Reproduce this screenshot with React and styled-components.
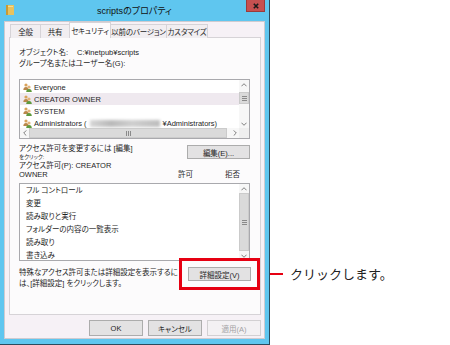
import styled, { createGlobalStyle } from "styled-components";

const GlobalStyle = createGlobalStyle`
  html, body {
    margin: 0;
    padding: 0;
    background: #ffffff;
  }
  body {
    font-family: "Liberation Sans", "Noto Sans CJK JP", sans-serif;
    font-size: 7.5px;
    color: #1e1e1e;
    font-feature-settings: "palt" 1;
  }
`;

const Page = styled.div`
  display: flex;
  align-items: flex-start;
  width: 450px;
  height: 345px;
  overflow: hidden;
`;

const Window = styled.div`
  width: 270px;
  height: 345px;
  box-sizing: border-box;
  display: flex;
  flex-direction: column;
  background: #5fc6ef;
  border-right: 1px solid #2b4b5e;
  border-bottom: 1px solid #2b4b5e;
  padding: 0 4px 5px 4px;
`;

const TitleBar = styled.div`
  height: 21px;
  flex-shrink: 0;
  display: grid;
  grid-template-columns: 19px 1fr 19px;
  align-items: start;
`;

const FolderIcon = styled.svg`
  width: 8px;
  height: 10px;
  margin: 5px 0 0 2px;
`;

const Title = styled.div`
  text-align: center;
  font-size: 9px;
  line-height: 10px;
  padding-top: 6px;
  color: #111;
`;

const CloseButton = styled.div`
  height: 12px;
  background: #c75050;
  border: 1px solid #9b3b3b;
  border-top: none;
  box-sizing: border-box;
  display: flex;
  align-items: center;
  justify-content: center;
`;

const Body = styled.div`
  flex: 1;
  display: flex;
  flex-direction: column;
  background: #f6f1f6;
  border: 1px solid #cfcbd0;
  padding: 0 3px 0 4px;
`;

const TabRow = styled.div`
  display: flex;
  align-items: flex-end;
  height: 16px;
  padding-left: 1px;
`;

const Tab = styled.div`
  width: ${p => p.$w}px;
  height: ${p => (p.$active ? 16 : 14)}px;
  box-sizing: border-box;
  border: 1px solid #d6d3d7;
  border-bottom: none;
  background: ${p => (p.$active ? "#fcfbfc" : "#f1eef1")};
  display: flex;
  align-items: center;
  justify-content: center;
  white-space: nowrap;
  letter-spacing: -0.2px;
  overflow: hidden;
  padding-bottom: ${p => (p.$active ? 1 : 0)}px;
  position: relative;
  z-index: ${p => (p.$active ? 1 : 0)};
  margin-left: -1px;
  &:first-child { margin-left: 0; }
`;

const Panel = styled.div`
  height: 278px;
  margin-top: -1px;
  box-sizing: border-box;
  border: 1px solid #d6d3d7;
  background: #fcfbfc;
  padding: 9px 10px 0 9px;
  display: flex;
  flex-direction: column;
`;

const InfoRow = styled.div`
  display: flex;
  height: 11px;
  line-height: 11px;
  white-space: nowrap;
`;

const InfoLabel = styled.span`
  width: 58px;
`;

const Listbox = styled.div`
  margin-top: ${p => p.$top}px;
  height: ${p => p.$h}px;
  box-sizing: border-box;
  border: 1px solid #a9a9ad;
  background: #ffffff;
  display: grid;
  grid-template-columns: 1fr 10px;
  grid-template-rows: ${p => (p.$hscroll ? "1fr 10px" : "1fr")};
  overflow: hidden;
`;

const Rows = styled.div`
  overflow: hidden;
  padding-top: ${p => p.$pt}px;
`;

const UserRow = styled.div`
  height: 12px;
  display: flex;
  align-items: center;
  gap: 2px;
  padding-left: 3px;
  white-space: nowrap;
  background: ${p => (p.$selected ? "#efe9ef" : "transparent")};
`;

const PermRow = styled.div`
  height: 13px;
  line-height: 13px;
  padding-left: 6px;
  white-space: nowrap;
`;

const Blurred = styled.span`
  display: inline-block;
  width: 70px;
  height: 7px;
  margin: 0 1px;
  background: linear-gradient(90deg, #d6d6d6, #b9b9b9 30%, #cfcfcf 60%, #bdbdbd);
  filter: blur(1.4px);
`;

const VScroll = styled.div`
  display: flex;
  flex-direction: column;
  background: #f7f7f7;
`;

const HScroll = styled.div`
  display: flex;
  align-items: stretch;
  background: #f7f7f7;
`;

const Corner = styled.div`
  background: #efefef;
`;

const ArrowBox = styled.div`
  flex-shrink: 0;
  width: ${p => (p.$horizontal ? "9px" : "auto")};
  height: ${p => (p.$horizontal ? "auto" : "9px")};
  display: flex;
  align-items: center;
  justify-content: center;
`;

const ArrowSvg = styled.svg`
  width: 6px;
  height: 4px;
  fill: none;
  stroke: #6a6a6a;
  stroke-width: 1;
  transform: rotate(${p => p.$rot}deg);
`;

const Thumb = styled.div`
  background: #dadada;
  border: 1px solid #cbcbcb;
  box-sizing: border-box;
  display: flex;
  align-items: center;
  justify-content: center;
  flex: ${p => (p.$grow ? 1 : "none")};
  height: ${p => (p.$h ? p.$h + "px" : "auto")};
  margin: ${p => p.$m};
`;

const GripSvg = styled.svg`
  width: 5px;
  height: 5px;
  stroke: #8a8a8a;
  stroke-width: 1;
`;

const AccessRow = styled.div`
  display: flex;
  justify-content: space-between;
  margin-top: 5px;
`;

const TextLines = styled.div`
  display: flex;
  flex-direction: column;
  white-space: nowrap;
`;

const Line = styled.div`
  height: ${p => p.$h}px;
  line-height: ${p => p.$h}px;
  font-size: ${p => (p.$small ? "5.5px" : "inherit")};
`;

const RightCol = styled.div`
  width: 72px;
  display: flex;
  flex-direction: column;
  align-items: flex-end;
  justify-content: space-between;
`;

const Button = styled.div`
  width: ${p => p.$w}px;
  height: ${p => p.$h}px;
  box-sizing: border-box;
  border: 1px solid ${p => (p.$disabled ? "#d2d0d2" : "#acacac")};
  background: ${p => (p.$disabled ? "#f3f1f3" : "#e3e2e3")};
  color: ${p => (p.$disabled ? "#a3a1a3" : "#1e1e1e")};
  display: flex;
  align-items: center;
  justify-content: center;
  white-space: nowrap;
  margin-top: ${p => p.$top || 0}px;
`;

const Heads = styled.div`
  width: 72px;
  height: 9px;
  line-height: 9px;
  display: flex;
  gap: 32px;
`;

const BottomRow = styled.div`
  display: flex;
  justify-content: space-between;
  align-items: flex-start;
`;

const BottomText = styled.div`
  margin-top: 6px;
  white-space: nowrap;
  line-height: 11px;
`;

const RedBox = styled.div`
  margin-top: -3px;
  margin-right: -10px;
  border: 3px solid #e60012;
  padding: 6px;
  position: relative;
  z-index: 1;
`;

const ButtonRow = styled.div`
  display: flex;
  justify-content: flex-end;
  gap: 5px;
  margin-top: 5px;
`;

const Callout = styled.div`
  display: flex;
  align-items: center;
  margin-top: 267px;
  height: 14px;
`;

const CalloutLine = styled.div`
  width: 13px;
  height: 2px;
  background: #e60012;
`;

const CalloutText = styled.span`
  margin-left: 7px;
  font-family: "Noto Sans CJK JP", sans-serif;
  font-size: 13px;
  line-height: 14px;
  color: #222;
  font-feature-settings: normal;
  white-space: nowrap;
`;

function Chevron({ dir }) {
  const rot = { up: 0, right: 90, down: 180, left: 270 }[dir];
  return (
    <ArrowSvg viewBox="0 0 7 4" $rot={rot}>
      <path d="M0.5 3.5 L3.5 0.5 L6.5 3.5" />
    </ArrowSvg>
  );
}

function Grip({ horizontal }) {
  return (
    <GripSvg viewBox="0 0 5 5">
      {horizontal ? (
        <path d="M0.5 0 V5 M2.5 0 V5 M4.5 0 V5" />
      ) : (
        <path d="M0 0.5 H5 M0 2.5 H5 M0 4.5 H5" />
      )}
    </GripSvg>
  );
}

function GroupIcon() {
  return (
    <svg width="9" height="9" viewBox="0 0 9 9">
      <circle cx="3" cy="2" r="1.6" fill="#d9a35a" />
      <path d="M0.3 7 Q0.5 4 3 4 Q5.5 4 5.6 7 Z" fill="#b9874a" />
      <circle cx="6" cy="4" r="1.6" fill="#e3b278" />
      <path d="M3.2 9 Q3.3 6 6 6 Q8.7 6 8.8 9 Z" fill="#5f9a3e" />
    </svg>
  );
}

const users = ["Everyone", "CREATOR OWNER", "SYSTEM"];
const perms = [
  "フル コントロール",
  "変更",
  "読み取りと実行",
  "フォルダーの内容の一覧表示",
  "読み取り",
  "書き込み",
];
const tabs = [
  { label: "全般", w: 31 },
  { label: "共有", w: 30 },
  { label: "セキュリティ", w: 42, active: true },
  { label: "以前のバージョン", w: 57 },
  { label: "カスタマイズ", w: 42 },
];

export default function App() {
  return (
    <Page>
      <GlobalStyle />
      <Window>
        <TitleBar>
          <FolderIcon viewBox="0 0 8 10">
            <rect x="0" y="0" width="8" height="10" fill="#e8c25e" />
            <rect x="0" y="0" width="2" height="10" fill="#c99a35" />
            <rect x="2" y="1" width="5" height="1" fill="#f5dc94" />
          </FolderIcon>
          <Title>scriptsのプロパティ</Title>
          <CloseButton>
            <svg width="6" height="6" viewBox="0 0 6 6">
              <path d="M0.8 0.8 L5.2 5.2 M5.2 0.8 L0.8 5.2" stroke="#1a1a1a" strokeWidth="1.6" />
            </svg>
          </CloseButton>
        </TitleBar>
        <Body>
          <TabRow>
            {tabs.map(t => (
              <Tab key={t.label} $w={t.w} $active={t.active}>
                {t.label}
              </Tab>
            ))}
          </TabRow>
          <Panel>
            <InfoRow>
              <InfoLabel>オブジェクト名:</InfoLabel>
              <span>C:¥inetpub¥scripts</span>
            </InfoRow>
            <InfoRow>グループ名またはユーザー名(G):</InfoRow>

            <Listbox $top={10} $h={60} $hscroll>
              <Rows $pt={1}>
                {users.map(u => (
                  <UserRow key={u} $selected={u === "CREATOR OWNER"}>
                    <GroupIcon />
                    <span>{u}</span>
                  </UserRow>
                ))}
                <UserRow>
                  <GroupIcon />
                  <span>Administrators (</span>
                  <Blurred />
                  <span>¥Administrators)</span>
                </UserRow>
              </Rows>
              <VScroll>
                <ArrowBox><Chevron dir="up" /></ArrowBox>
                <Thumb $h={12} $m="3px 0 0 0"><Grip /></Thumb>
                <div style={{ flex: 1 }} />
                <ArrowBox><Chevron dir="down" /></ArrowBox>
              </VScroll>
              <HScroll>
                <ArrowBox $horizontal><Chevron dir="left" /></ArrowBox>
                <Thumb $grow $m="0 3px 0 0"><Grip horizontal /></Thumb>
                <ArrowBox $horizontal><Chevron dir="right" /></ArrowBox>
              </HScroll>
              <Corner />
            </Listbox>

            <AccessRow>
              <TextLines>
                <Line $h={10}>アクセス許可を変更するには [編集]</Line>
                <Line $h={7} $small>をクリック:</Line>
                <Line $h={9}>アクセス許可(P): CREATOR</Line>
                <Line $h={9}>OWNER</Line>
              </TextLines>
              <RightCol>
                <Button $w={63} $h={14} $top={1}>編集(E)...</Button>
                <Heads>
                  <span>許可</span>
                  <span>拒否</span>
                </Heads>
              </RightCol>
            </AccessRow>

            <Listbox $top={4} $h={78}>
              <Rows $pt={0}>
                {perms.map(p => (
                  <PermRow key={p}>{p}</PermRow>
                ))}
              </Rows>
              <VScroll>
                <ArrowBox><Chevron dir="up" /></ArrowBox>
                <Thumb $grow $m="0"><Grip /></Thumb>
                <ArrowBox><Chevron dir="down" /></ArrowBox>
              </VScroll>
            </Listbox>

            <BottomRow>
              <BottomText>
                特殊なアクセス許可または詳細設定を表示するに
                <br />
                は、[詳細設定] をクリックします。
              </BottomText>
              <RedBox>
                <Button $w={63} $h={14}>詳細設定(V)</Button>
              </RedBox>
            </BottomRow>
          </Panel>
          <ButtonRow>
            <Button $w={54} $h={16}>OK</Button>
            <Button $w={54} $h={16}>キャンセル</Button>
            <Button $w={54} $h={16} $disabled>適用(A)</Button>
          </ButtonRow>
        </Body>
      </Window>
      <Callout>
        <CalloutLine />
        <CalloutText>クリックします。</CalloutText>
      </Callout>
    </Page>
  );
}
